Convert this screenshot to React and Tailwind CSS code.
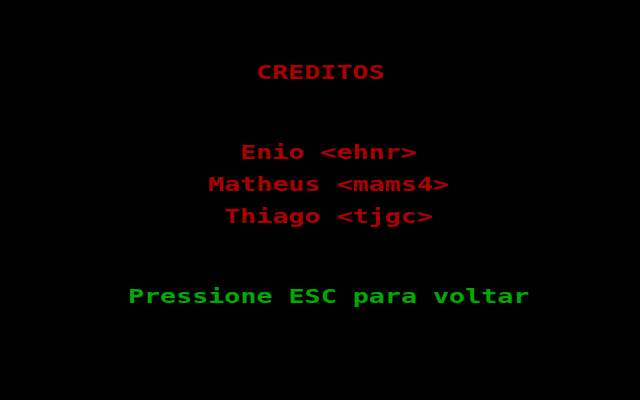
import React from 'react'

const lines = [
  { text: 'Enio <ehnr>', pad: 'pl-[240px]' },
  { text: 'Matheus <mams4>', pad: 'pl-[208px]' },
  { text: 'Thiago <tjgc>', pad: 'pl-[224px]' },
]

// chunky 16px-wide cells, like the 40-column text mode
const Txt = ({ children }) => (
  <span className="inline-block origin-left scale-x-[1.3333]">{children}</span>
)

const App = () => {
  return (
    <div className="w-[640px] h-[400px] bg-black overflow-hidden font-['DejaVu_Sans_Mono',monospace] font-bold text-[20px] leading-4 whitespace-pre">
      <div className="pt-16 pl-[256px] h-20 text-[#aa0000]"><Txt>CREDITOS</Txt></div>
      <div className="mt-16 flex flex-col gap-4 text-[#aa0000]">
        {lines.map((l) => (
          <div key={l.text} className={"h-4 " + l.pad}><Txt>{l.text}</Txt></div>
        ))}
      </div>
      <div className="mt-16 pl-[128px] h-4 text-[#00aa00]"><Txt>Pressione ESC para voltar</Txt></div>
    </div>
  )
}

export default App
